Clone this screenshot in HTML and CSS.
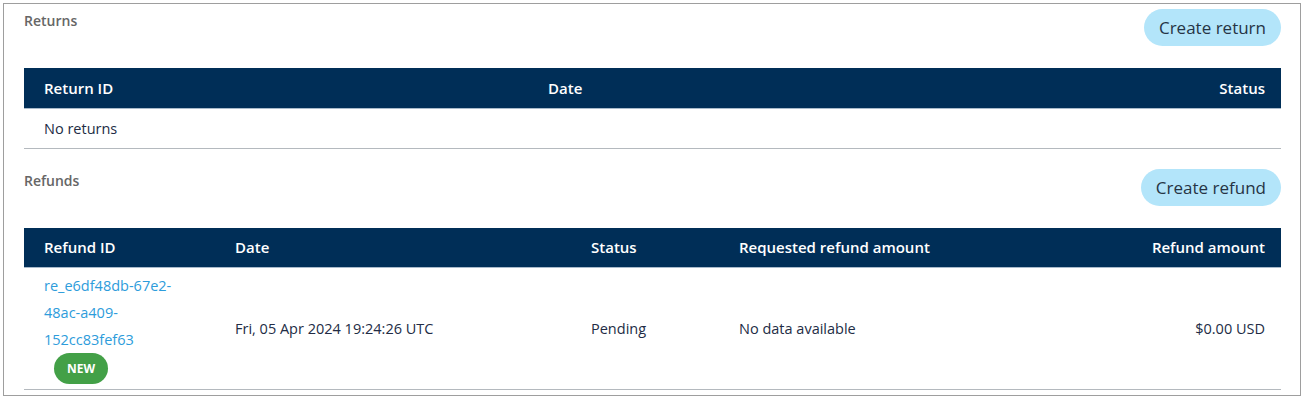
FILE: index.html
```html
<!DOCTYPE html>
<html>
<head>
<meta charset="utf-8">
<link rel="stylesheet" href="styles.css">
</head>
<body>
<div class="card">
  <section class="section">
    <div class="section-head">
      <h2 class="section-title">Returns</h2>
      <button class="btn-create btn-return">Create return</button>
    </div>
    <table class="data-table">
      <colgroup><col class="c-rid"><col class="c-rdate"><col></colgroup>
      <thead>
        <tr><th>Return ID</th><th>Date</th><th class="right">Status</th></tr>
      </thead>
      <tbody>
        <tr class="row-short"><td colspan="3">No returns</td></tr>
      </tbody>
    </table>
  </section>
  <section class="section section-refunds">
    <div class="section-head">
      <h2 class="section-title">Refunds</h2>
      <button class="btn-create btn-refund">Create refund</button>
    </div>
    <table class="data-table">
      <colgroup><col class="c-fid"><col class="c-fdate"><col class="c-fstatus"><col class="c-freq"><col></colgroup>
      <thead>
        <tr><th>Refund ID</th><th>Date</th><th>Status</th><th>Requested refund amount</th><th class="right">Refund amount</th></tr>
      </thead>
      <tbody>
        <tr class="row-refund">
          <td class="id-cell">
            <div class="id-wrap">
              <a class="id-link" href="#">re_e6df48db-67e2-48ac-a409-152cc83fef63</a>
              <span class="badge-new">NEW</span>
            </div>
          </td>
          <td>Fri, 05 Apr 2024 19:24:26 UTC</td>
          <td>Pending</td>
          <td>No data available</td>
          <td class="right">$0.00 USD</td>
        </tr>
      </tbody>
    </table>
  </section>
</div>
</body>
</html>
```

FILE: styles.css
```css
* { box-sizing: border-box; }
html, body { margin: 0; padding: 0; background: #fff; }
body {
  padding: 3px 6px 4px 3px;
  font-family: "Open Sans", "Liberation Sans", sans-serif;
  color: #222c45;
}
.card {
  border: 1px solid #9e9e9e;
  padding: 5px 19px 6px 20px;
  height: 393px;
}
.section-head {
  display: flex;
  justify-content: space-between;
  align-items: flex-start;
  margin-bottom: 22px;
}
.section-refunds { margin-top: 20px; }
.section-title {
  margin: 2px 0 0 0;
  font-size: 14px;
  font-weight: 600;
  color: #666;
  line-height: 20px;
}
.btn-create {
  border: none;
  background: #b3e5fa;
  color: #263445;
  font-family: inherit;
  font-size: 17px;
  line-height: 21px;
  height: 37px;
  padding: 0 15px;
  border-radius: 19px;
}
.data-table {
  width: 100%;
  border-collapse: collapse;
  table-layout: fixed;
  font-size: 14.5px;
}
.c-rid { width: 504px; }
.c-rdate { width: 500px; }
.c-fid { width: 191px; }
.c-fdate { width: 356px; }
.c-fstatus { width: 148px; }
.c-freq { width: 300px; }
.data-table th {
  background: #002e57;
  color: #fff;
  font-size: 15px;
  font-weight: 600;
  text-align: left;
  height: 40px;
  padding: 0 16px 0 20px;
  border-bottom: 1px solid #a8bacb;
}
.data-table td {
  padding: 0 16px 0 20px;
  border-bottom: 1px solid #b4b9be;
  vertical-align: middle;
}
.data-table .right { text-align: right; }
.row-short td { height: 40px; }
.id-cell { padding-top: 4px !important; padding-bottom: 5px !important; }
.id-wrap { width: 150px; }
.id-link {
  display: block;
  color: #2d9cdb;
  text-decoration: none;
  line-height: 27px;
}
.badge-new {
  display: inline-block;
  margin: 0 0 0 10px;
  background: #43a047;
  color: #fff;
  font-size: 12px;
  font-weight: 700;
  line-height: 31px;
  height: 31px;
  padding: 0 13px;
  border-radius: 16px;
  vertical-align: top;
}
```
